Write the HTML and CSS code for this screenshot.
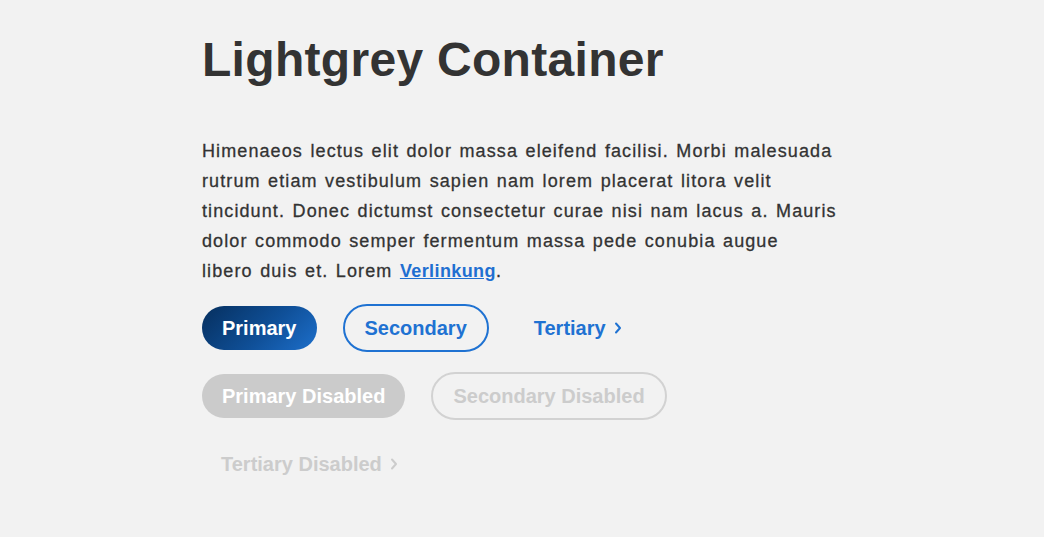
FILE: index.html
```html
<!DOCTYPE html>
<html lang="en">
<head>
  <meta charset="UTF-8" />
  <meta name="viewport" content="width=device-width, initial-scale=1.0" />
  <title>Lightgrey Container</title>
  <link rel="stylesheet" href="styles.css">
</head>
<body>
  <main class="container">
    <h1>Lightgrey Container</h1>
    <p class="lead">
      Himenaeos lectus elit dolor massa eleifend facilisi. Morbi malesuada<br>
      rutrum etiam vestibulum sapien nam lorem placerat litora velit<br>
      tincidunt. Donec dictumst consectetur curae nisi nam lacus a. Mauris<br>
      dolor commodo semper fermentum massa pede conubia augue<br>
      libero duis et. Lorem <a href="#">Verlinkung</a>.
    </p>

    <div class="button-row">
      <button class="btn btn-primary">Primary</button>
      <button class="btn btn-secondary">Secondary</button>
      <button class="btn btn-tertiary">Tertiary
        <svg class="chevron" viewBox="0 0 8 12" width="8" height="12"><path d="M2 1.5 L6 6 L2 10.5" /></svg>
      </button>
    </div>
    <div class="button-row">
      <button class="btn btn-primary" disabled>Primary Disabled</button>
      <button class="btn btn-secondary" disabled>Secondary Disabled</button>
    </div>
    <div class="button-row">
      <button class="btn btn-tertiary" disabled>Tertiary Disabled
        <svg class="chevron" viewBox="0 0 8 12" width="8" height="12"><path d="M2 1.5 L6 6 L2 10.5" /></svg>
      </button>
    </div>
  </main>
</body>
</html>
```

FILE: styles.css
```css
body {
  font-family: "Liberation Sans", Arial, sans-serif;
  margin: 0;
  padding: 0;
  background-color: #f2f2f2;
  color: #333;
}
.container {
  max-width: 640px;
  margin: 0 auto;
  padding-top: 31px;
}
h1 {
  font-size: 48px;
  line-height: 58px;
  font-weight: bold;
  letter-spacing: 0.3px;
  margin: 0 0 47px;
}
.lead {
  font-size: 18px;
  line-height: 30px;
  letter-spacing: 1.1px;
  word-spacing: 1.4px;
  white-space: nowrap;
  margin: 0 0 18px;
  -webkit-text-stroke: 0.3px #333;
}
.lead a {
  color: #1f6fd1;
  font-weight: bold;
  letter-spacing: 0.4px;
  -webkit-text-stroke: 0;
}
.button-row {
  display: flex;
  align-items: center;
  gap: 26px;
  min-height: 48px;
  margin-bottom: 20px;
}
.btn {
  font-family: inherit;
  font-size: 20px;
  font-weight: bold;
  line-height: 24px;
  padding: 10px 20px;
  border: none;
  border-radius: 24px;
  background: none;
  cursor: pointer;
  display: inline-flex;
  align-items: center;
}
.btn-primary {
  color: white;
  background: linear-gradient(135deg, #062f5e 0%, #0f4f97 55%, #1d6fcb 100%);
}
.btn-secondary {
  color: #1f72d2;
  border: 2px solid #1f72d2;
  background: transparent;
}
.btn-tertiary {
  color: #1f72d2;
  margin-left: -1px;
}
.chevron {
  margin-left: 8px;
  fill: none;
  stroke: currentColor;
  stroke-width: 2;
  stroke-linecap: round;
  stroke-linejoin: round;
}
.btn:disabled {
  cursor: default;
}
.btn-primary:disabled {
  background: #cbcbcb;
  color: white;
}
.btn-secondary:disabled {
  border-color: #d2d2d2;
  color: #cccccc;
}
.btn-tertiary:disabled {
  color: #cccccc;
}
```
